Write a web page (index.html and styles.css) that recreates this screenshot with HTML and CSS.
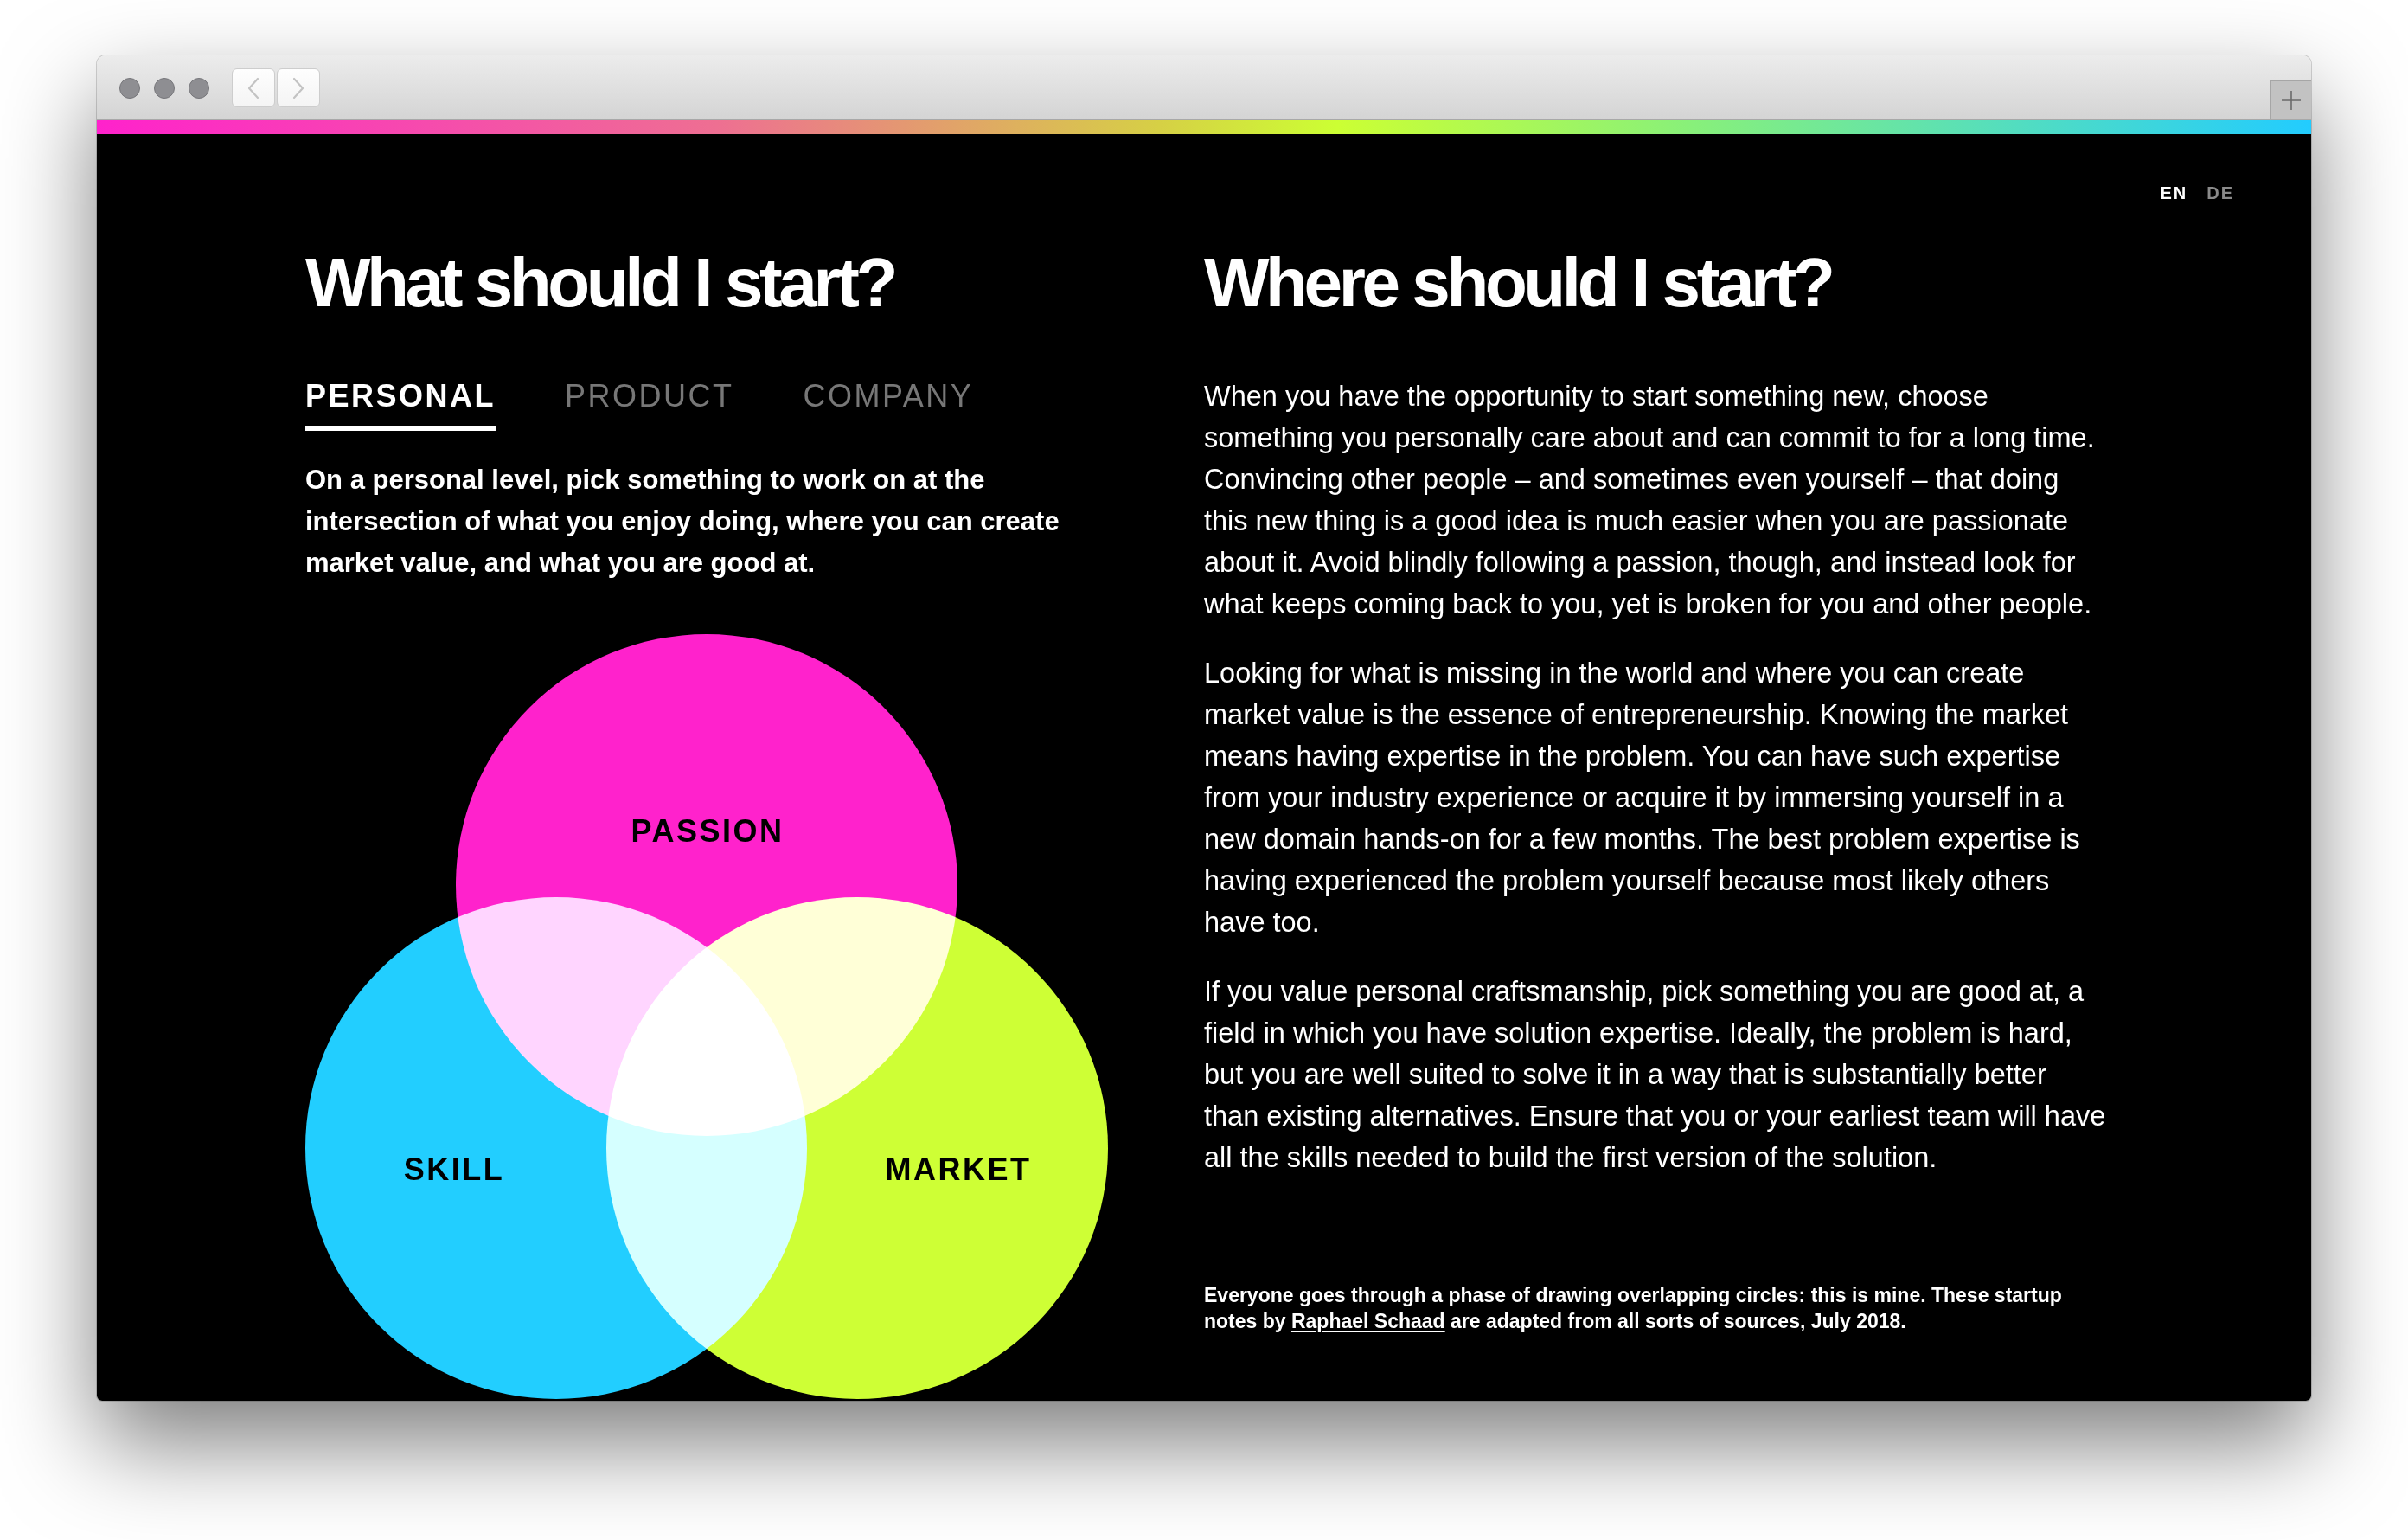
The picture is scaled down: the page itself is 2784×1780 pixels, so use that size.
FILE: index.html
```html
<!DOCTYPE html>
<html lang="en">
<head>
<meta charset="utf-8">
<title>What should I start?</title>
<link rel="stylesheet" href="styles.css">
</head>
<body>
<div class="window">
  <div class="titlebar">
    <div class="lights">
      <span class="light"></span><span class="light"></span><span class="light"></span>
    </div>
    <div class="navbtns">
      <span class="navbtn"><svg width="16" height="26" viewBox="0 0 16 26"><path d="M13 2 L3 13 L13 24" fill="none" stroke="#c3c3c3" stroke-width="2.2" stroke-linecap="round" stroke-linejoin="round"/></svg></span>
      <span class="navbtn"><svg width="16" height="26" viewBox="0 0 16 26"><path d="M3 2 L13 13 L3 24" fill="none" stroke="#c3c3c3" stroke-width="2.2" stroke-linecap="round" stroke-linejoin="round"/></svg></span>
    </div>
    <div class="newtab"><svg width="22" height="22" viewBox="0 0 22 22"><path d="M11 0 V22 M0 11 H22" stroke="#6a6a6a" stroke-width="1.6"/></svg></div>
  </div>
  <div class="rainbow"></div>
  <div class="content">
    <div class="lang"><span class="on">EN</span><span class="off">DE</span></div>
    <div class="columns">
      <section class="col col-left">
        <h1 class="title">What should I start?</h1>
        <nav class="tabs">
          <span class="tab active">PERSONAL</span>
          <span class="tab">PRODUCT</span>
          <span class="tab">COMPANY</span>
        </nav>
        <p class="intro">On a personal level, pick something to work on at the intersection of what you enjoy doing, where you can create market value, and what you are good at.</p>
        <svg class="venn" width="928" height="884" viewBox="0 0 928 884">
          <circle class="blend" cx="464" cy="290" r="290" fill="#ff22cc"/>
          <circle class="blend" cx="290" cy="594" r="290" fill="#22ceff"/>
          <circle class="blend" cx="638" cy="594" r="290" fill="#ceff35"/>
          <text x="465" y="240">PASSION</text>
          <text x="172" y="631">SKILL</text>
          <text x="755" y="631">MARKET</text>
        </svg>
      </section>
      <section class="col col-right">
        <h1 class="title">Where should I start?</h1>
        <p class="body first">When you have the opportunity to start something new, choose something you personally care about and can commit to for a long time. Convincing other people – and sometimes even yourself – that doing this new thing is a good idea is much easier when you are passionate about it. Avoid blindly following a passion, though, and instead look for what keeps coming back to you, yet is broken for you and other people.</p>
        <p class="body">Looking for what is missing in the world and where you can create market value is the essence of entrepreneurship. Knowing the market means having expertise in the problem. You can have such expertise from your industry experience or acquire it by immersing yourself in a new domain hands-on for a few months. The best problem expertise is having experienced the problem yourself because most likely others have too.</p>
        <p class="body">If you value personal craftsmanship, pick something you are good at, a field in which you have solution expertise. Ideally, the problem is hard, but you are well suited to solve it in a way that is substantially better than existing alternatives. Ensure that you or your earliest team will have all the skills needed to build the first version of the solution.</p>
        <p class="note">Everyone goes through a phase of drawing overlapping circles: this is mine. These startup notes by <a href="#">Raphael Schaad</a> are adapted from all sorts of sources, July 2018.</p>
      </section>
    </div>
  </div>
</div>
</body>
</html>
```

FILE: styles.css
```css
* { box-sizing: border-box; }
html, body { margin: 0; padding: 0; }
body {
  background: #ffffff;
  width: 2784px;
  height: 1780px;
  overflow: hidden;
  font-family: "Liberation Sans", Arial, Helvetica, sans-serif;
}
.window {
  margin: 64px 0 0 112px;
  width: 2560px;
  height: 1555px;
  border-radius: 10px 10px 6px 6px;
  overflow: hidden;
  display: flex;
  flex-direction: column;
  box-shadow: 0 50px 110px rgba(0,0,0,0.5), 0 0 0 1px rgba(0,0,0,0.16);
}
.titlebar {
  flex: none;
  height: 75px;
  display: flex;
  align-items: flex-start;
  background: linear-gradient(#ececec, #d4d4d4);
  border-bottom: 1px solid #a8a8a8;
}
.lights { display: flex; gap: 16px; margin: 26px 0 0 26px; }
.light {
  width: 24px; height: 24px; border-radius: 50%;
  background: #8e8e92;
  border: 1px solid #77777b;
}
.navbtns { display: flex; gap: 2px; margin: 15px 0 0 26px; }
.navbtn {
  width: 50px; height: 45px;
  border-radius: 6px;
  background: linear-gradient(#fefefe, #f4f4f4);
  border: 1px solid #cdcdcd;
  display: flex; align-items: center; justify-content: center;
}
.newtab {
  margin-left: auto;
  align-self: flex-end;
  width: 48px; height: 46px;
  background: #c2c2c2;
  border-left: 2px solid #a6a6a6;
  border-top: 2px solid #a6a6a6;
  display: flex; align-items: center; justify-content: center;
}
.rainbow {
  flex: none;
  height: 16px;
  background: linear-gradient(90deg, #ff22cc 0%, #ee6f92 28%, #d6d045 48%, #ccff33 56%, #88f07a 72%, #22ccff 100%);
}
.content {
  flex: 1;
  background: #000;
  color: #fff;
  display: flex;
  flex-direction: column;
}
.lang {
  display: flex;
  justify-content: flex-end;
  gap: 22px;
  padding: 56px 89px 0 0;
  font-size: 20px;
  line-height: 24px;
  font-weight: 700;
  letter-spacing: 2px;
}
.lang .off { color: #8a8a8a; }
.columns {
  display: grid;
  grid-template-columns: 1280px 1280px;
}
.col-left { padding-left: 241px; }
.title {
  margin: 52px 0 0;
  font-size: 80px;
  line-height: 80px;
  font-weight: 700;
  letter-spacing: -4.4px;
  white-space: nowrap;
}
.tabs { display: flex; gap: 80px; margin-top: 71px; }
.tab {
  font-size: 36px;
  line-height: 40px;
  letter-spacing: 2.5px;
  color: #777;
  padding-bottom: 14px;
  border-bottom: 6px solid transparent;
}
.tab.active { color: #fff; font-weight: 700; border-bottom-color: #fff; }
.intro {
  margin: 33px 0 0;
  width: 928px;
  font-size: 31px;
  line-height: 48px;
  font-weight: 700;
}
.venn { display: block; margin-top: 58px; }
.venn text {
  font-family: "Liberation Sans", Arial, Helvetica, sans-serif;
  font-size: 36px;
  font-weight: 700;
  letter-spacing: 2.5px;
  fill: #000;
  text-anchor: middle;
}
.blend { mix-blend-mode: screen; }
.body {
  margin: 32px 0 0;
  width: 1045px;
  font-size: 32.5px;
  line-height: 48px;
}
.body.first { margin-top: 67px; }
.note {
  margin: 120px 0 0;
  width: 1045px;
  font-size: 23px;
  line-height: 30px;
  font-weight: 700;
}
.note a {
  color: #fff;
  text-decoration: underline;
  text-decoration-thickness: 2px;
  text-underline-offset: 3px;
}
```
